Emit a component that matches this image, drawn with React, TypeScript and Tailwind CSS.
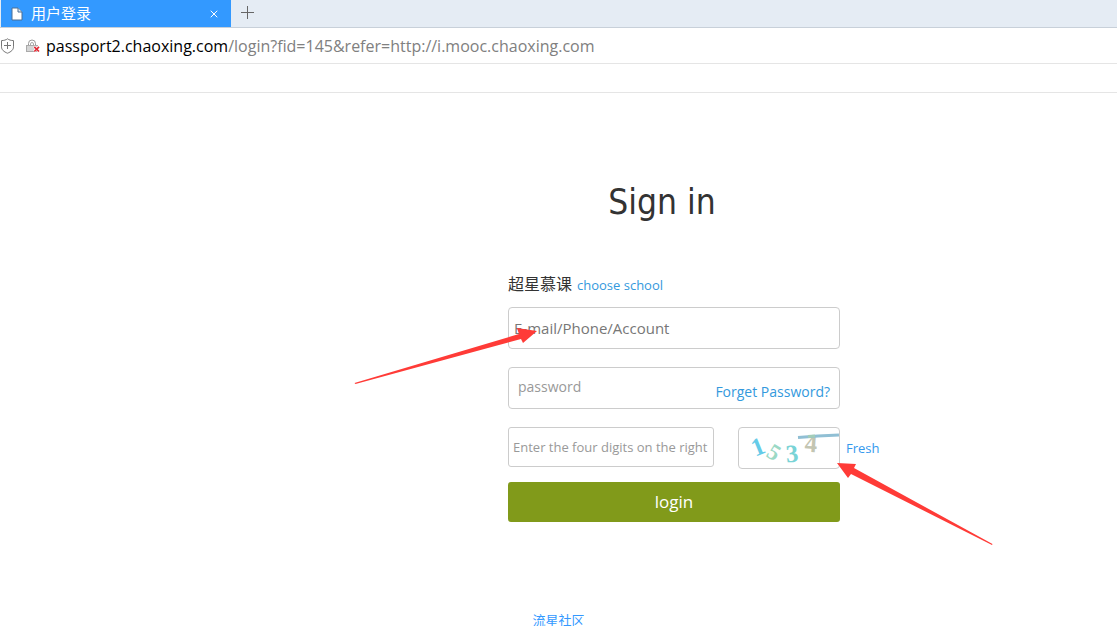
import { X } from "lucide-react";

function PageIcon() {
    return (
        <svg width="12" height="14" viewBox="0 0 12 14" aria-hidden="true">
            <path d="M1 1h6l4 4v8H1z" fill="#fff" stroke="#4a6f96" />
            <path d="M7 1v4h4" fill="#dfe9f3" stroke="#4a6f96" />
        </svg>
    );
}

function ShieldIcon() {
    return (
        <svg width="14" height="16" viewBox="0 0 14 16" fill="none" stroke="#777" aria-hidden="true">
            <path d="M7.500.8C6 2 4 2.500 1.500 2.600v6.200c0 3 2.400 5 6 6.400 3.600-1.400 6-3.400 6-6.400V2.600C11 2.500 9 2 7.500.8z" />
            <path d="M7.500 4v7M4 7.500h7" />
        </svg>
    );
}

function BrokenLockIcon() {
    return (
        <svg width="14" height="14" viewBox="0 0 14 14" fill="none" aria-hidden="true">
            <path d="M2.500 6V4.500a3.500 3.500 0 0 1 7 0V6" stroke="#999" />
            <path d="M4.500 6V5a1.500 1.500 0 0 1 3 0v1" stroke="#aaa" />
            <rect x=".5" y="6.500" width="11" height="6" fill="#d5d5d5" stroke="#aaa" />
            <path d="M8 7.500l5 5M13 7.500l-5 5" stroke="#fff" strokeWidth="2.500" />
            <path d="M8.300 7.800l4.700 4.700M13 7.800l-4.700 4.700" stroke="#e02b36" strokeWidth="1.700" />
        </svg>
    );
}

function Captcha() {
    return (
        <svg width="100" height="40" viewBox="0 0 100 40" role="img" aria-label="1534">
            <g fontSize="25" fontWeight="700" className="font-['Liberation_Serif',serif]" textAnchor="middle">
                <text x="0" y="8" fill="#65cbe8" transform="translate(19 19) rotate(-22)">1</text>
                <text x="0" y="8" fill="#9bd9c5" fontSize="23" transform="translate(35 24) rotate(32)">5</text>
                <text x="0" y="8" fill="#79d3d6" transform="translate(53 26) rotate(-5)">3</text>
                <text x="0" y="8" fill="#c3c5b2" transform="translate(72 16) rotate(4)">4</text>
            </g>
            <path d="M59 9.500L79 8l21-1" fill="none" stroke="#90bfd4" strokeWidth="3" />
            <path d="M69 8.500l7-.5" stroke="#a3cdb8" strokeWidth="3" />
        </svg>
    );
}

function BrowserBar() {
    return (
        <header>
            <div className="flex h-7 items-stretch border-b border-[#c8d0d9] bg-[#e5ecf4]">
                <div className="ml-px flex w-[230px] items-center gap-2 bg-[#3399ff] pr-[11px] pl-[10px] text-white">
                    <PageIcon />
                    <span className="flex-1 text-[15px]">用户登录</span>
                    <button type="button" aria-label="Close tab">
                        <X size={12} strokeWidth={2} />
                    </button>
                </div>
                <button type="button" aria-label="New tab" className="px-2 text-[#666]">
                    <svg width="16" height="16" viewBox="0 0 16 16" stroke="currentColor" aria-hidden="true" className="-mt-1">
                        <path d="M8.500 2v13M2 8.500h13" />
                    </svg>
                </button>
            </div>
            <div className="flex h-9 items-center border-b border-[#e5e5e5]">
                <ShieldIcon />
                <span className="mr-1.5 ml-3">
                    <BrokenLockIcon />
                </span>
                <p className="text-base text-[#808080]">
                    <span className="text-black">passport2.chaoxing.com</span>
                    /login?fid=145&amp;refer=http://i.mooc.chaoxing.com
                </p>
            </div>
            <div className="h-[29px] border-b border-[#e5e5e5]" />
        </header>
    );
}

function LoginForm() {
    return (
        <form className="relative" onSubmit={(e) => e.preventDefault()}>
            <div className="mb-[11px] flex h-6 items-center gap-[5px] text-base text-[#333]">
                <span>超星慕课</span>
                <a href="#school" className="pt-[3px] text-[13px] text-[#3399dd]">
                    choose school
                </a>
            </div>

            <input
                type="text"
                aria-label="E-mail/Phone/Account"
                placeholder="E-mail/Phone/Account"
                className="block h-[42px] w-[332px] rounded border border-[#ccc] px-[5px] text-[15px] placeholder:text-[#777]"
            />

            <div className="mt-[18px] flex h-[42px] w-[332px] items-center rounded border border-[#ccc] px-[9px]">
                <input
                    type="password"
                    aria-label="password"
                    placeholder="password"
                    className="mb-0.5 min-w-0 flex-1 text-sm placeholder:text-[#999]"
                />
                <a href="#forget" className="mt-2 text-sm text-[#3399dd]">
                    Forget Password?
                </a>
            </div>

            <div className="mt-[18px] flex items-start">
                <input
                    type="text"
                    aria-label="Enter the four digits on the right"
                    placeholder="Enter the four digits on the right"
                    className="h-10 w-[206px] shrink-0 rounded-[3px] border border-[#ccc] px-1 text-[13px] placeholder:text-[#999]"
                />
                <div className="ml-6 h-[42px] w-[102px] shrink-0 rounded border border-[#ccc]">
                    <Captcha />
                </div>
                <a href="#fresh" className="ml-1.5 text-[13px] leading-[42px] text-[#3399ee]">
                    Fresh
                </a>
            </div>

            <button type="submit" className="mt-[13px] block h-10 w-[332px] rounded-[3px] bg-[#819a1a] text-[17px] text-white">
                login
            </button>

            {/* pointer arrows over the account and captcha fields */}
            <svg width="184" height="56" viewBox="0 0 184 56" className="pointer-events-none absolute top-[56px] -left-[154px]" aria-hidden="true">
                <path d="M.5 55L165 6l-2-6 20 3-14 12-2-4L1.500 56z" fill="#ff3b37" />
            </svg>
            <svg width="156" height="84" viewBox="0 0 156 84" className="pointer-events-none absolute top-[191px] left-[329px]" aria-hidden="true">
                <path d="M0 0l19 1-2 4 138.500 76-.5 1L14 11l-3 4z" fill="#ff3b37" />
            </svg>
        </form>
    );
}

export default function App() {
    return (
        <div className="bg-white font-['Open_Sans','Noto_Sans_CJK_SC',sans-serif]">
            <BrowserBar />
            <main className="mx-auto max-w-[637px] pt-[85px] pl-[268px]">
                <h1 className="mb-[46px] w-[308px] text-center font-['DejaVu_Sans_Condensed','DejaVu_Sans',sans-serif] text-[35px] leading-[48px] text-[#333]">
                    Sign in
                </h1>
                <LoginForm />
            </main>
            <footer className="mt-[92px] flex justify-center text-[13px] leading-3">
                <a href="#community" className="text-[#3399ff]">
                    流星社区
                </a>
            </footer>
        </div>
    );
}
